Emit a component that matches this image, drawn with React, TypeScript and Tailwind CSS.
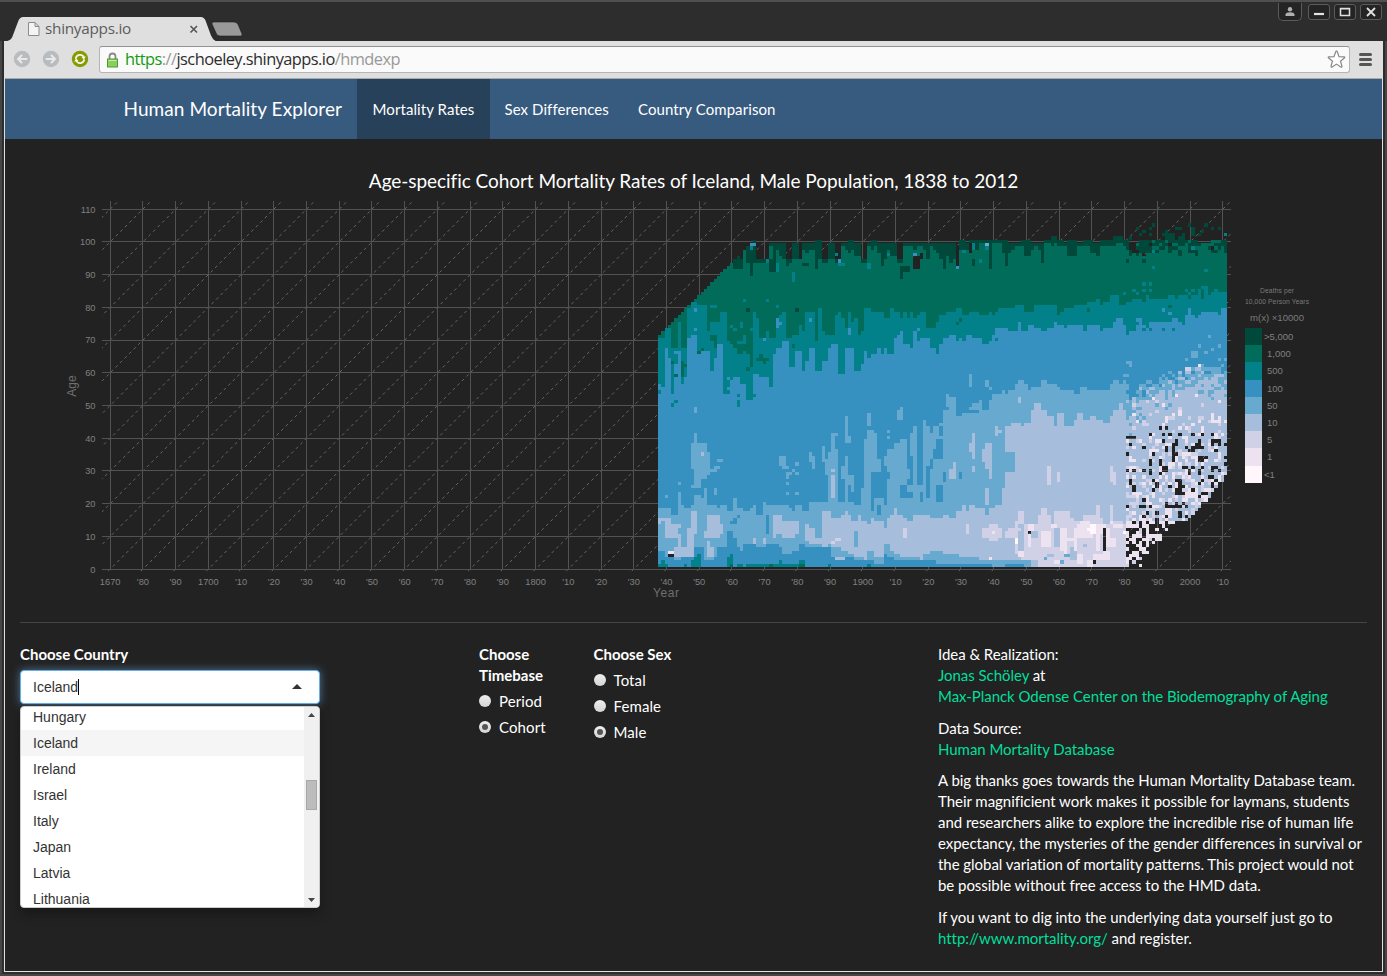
import React from 'react';

const COLORS = ['#00483a', '#016c59', '#02818a', '#3690c0', '#67a9cf', '#a6bddb', '#d0d1e6', '#ece2f0', '#fff7fb'];
const COLS = 174;
const ROWS = 108;
const STEP = 3.2723;
const LEFT = 658;
const BASE = 567;

// Contours and patches are stored in thirds of a pixel, relative to one of four chart quadrants.
type Panel = 'A' | 'B' | 'C' | 'D';
const ORIGIN: Record<Panel, [number, number]> = { A: [640, 195], B: [930, 195], C: [640, 390], D: [930, 390] };

const toPoints = (panel: Panel, s: string) =>
  s.trim().split(/\s+/).map((p) => {
    const [x, y] = p.split(':').map(Number);
    return [ORIGIN[panel][0] + x / 3, ORIGIN[panel][1] + y / 3];
  });

const contour = (...parts: [Panel, string][]) => parts.flatMap(([p, s]) => toPoints(p, s));

const dataTop = contour(
  ['A', '54:423 64:413 74:403 84:393 93:383 103:373 113:364 123:354 133:344 143:334 152:324 162:314 172:304 182:295 192:285 201:275 211:265 221:255 231:245 241:236 250:226 260:216 270:206 280:196 290:187 300:196 309:167 319:157 329:147 340:136 348:195 388:147 438:195 457:147 477:195 487:147 525:136 546:195 564:147 585:195 603:147 625:136 642:147 663:195 683:147 693:136 711:147 771:195 792:147'],
  ['B', '0:147 88:136 108:147 118:136 235:147 275:136 302:147 342:136 363:126 382:136 400:147 412:136 442:147 462:136 488:147 508:136 548:126 580:136 597:144 620:136 740:136 800:136 850:136 880:128'],
);
const greenTop = contour(
  ['A', '54:0 280:222 308:165 322:205 330:242 340:205 348:205 378:200 388:232 408:165 420:185 430:195 438:215 447:200 457:195 477:195 487:160 497:175 510:165 525:222 535:195 546:205 556:200 564:195 585:200 595:195 603:155 614:160 625:175 635:160 642:180 663:200 683:155 693:165 705:150 712:175 722:210 732:195 740:160 750:185 771:200 792:155 820:160 830:150 850:165 860:190 870:155 880:165 888:175'],
  ['B', '0:200 10:155 20:175 30:190 40:225 50:185 60:200 70:195 78:200 88:165 108:165 118:150 125:165 145:155 150:147 178:225 185:147 215:175 225:213 235:175 248:165 255:155 275:155 285:185 303:165 312:155 322:165 332:205 342:147 360:157 372:147 385:155 412:187 442:155 470:155 480:175 500:185 508:155 540:157 555:147 580:157 590:180 620:165 640:185 660:155 680:160 700:140 720:155 740:165 760:155 780:175 800:145 840:150 870:150'],
);
const tealTop = contour(
  ['A', '54:430 74:403 93:457 113:383 123:457 144:342 154:320 171:333 200:340 212:335 222:333 230:350 240:350 260:440 270:450 280:455 290:480 300:475 308:465 320:480 330:515 338:352 348:370 360:425 375:410 390:425 408:375 420:360 430:350 440:425 460:420 470:415 480:385 488:405 497:352 507:350 525:430 535:345 546:405 556:415 585:360 595:350 605:370 615:400 625:350 635:375 642:370 652:415 663:405 672:345 693:350 712:352 730:372 752:342 762:350 782:372 792:350 800:370 812:350 822:370 830:360 840:352 860:400 888:360'],
  ['B', '0:400 18:375 30:362 50:352 78:343 96:360 115:352 136:350 144:360 175:350 185:360 195:352 205:343 230:345 250:333 285:350 312:333 382:360 393:350 405:343 432:335 472:323 500:313 510:330 520:323 540:303 568:330 588:313 600:320 607:305 635:313 650:303 660:310 700:313 720:305 735:305 750:295 765:290 775:300 785:305 795:290 805:280 815:300 825:275 835:290 855:273 865:292 880:282'],
);
const blueTop = contour(
  ['A', '54:565 64:580 74:455 84:490 93:595 103:510 113:475 123:563 134:550 144:430 171:470 190:465 212:525 222:490 232:450 252:590 262:580 270:560 280:545 300:570 320:615 340:535 360:550 375:545 388:575 400:480 410:460 428:440 447:515 468:470 488:525 498:500 510:460 525:530 546:500 556:495 566:460 575:445 595:535 614:455 640:470 645:525 660:510 672:465 682:485 695:480 712:460 720:480 732:460 740:475 760:435 770:420 792:450 805:460 815:410 830:435 840:425 850:425 870:460 888:478'],
  ['B', '0:465 18:478 30:450 40:430 60:420 75:440 88:425 100:435 110:420 125:428 155:445 175:440 185:420 200:403 235:410 265:382 273:405 295:393 310:403 325:398 335:410 352:400 372:382 385:393 400:403 410:388 430:392 462:410 472:392 510:410 520:400 550:380 560:373 580:385 590:410 605:400 620:388 640:400 655:380 690:385 700:378 740:375 757:385 766:360 775:352 795:370 805:350 830:350 845:345 855:352 870:343'],
);
const lightTop = contour(
  ['C', '54:357 75:350 94:375 113:310 123:345 134:357 152:345 162:318 182:325 192:300 202:345 230:357 240:345 260:360 280:325 290:357 310:365 325:355 340:345 348:375 368:335 380:345 450:355 460:365 470:345 482:365 508:335 555:335 595:335 605:335 625:335 640:345 662:365 672:345 692:360 705:325 732:345 742:290 780:325 820:290 840:335 850:325 870:345'],
  ['D', '0:130 10:110 30:100 40:60 60:20 75:80 90:75 100:65 118:50 125:40 145:35 155:60 180:30 190:15 200:10 215:5'],
  ['B', '225:598 235:582 255:570 265:558 285:570 295:588 305:575 323:570 335:558 355:568 380:575 393:590 430:595 442:600 450:577 470:590 500:588 530:582 540:570 550:560 570:570 580:560 598:570 630:550 650:538 690:525 740:512 770:505 800:495 830:487 860:482 880:478'],
);
const lavTop = contour(
  ['C', '54:3000 497:405 507:415 527:440 546:367 575:385 605:375 615:358 625:375 635:395 652:375 663:395 680:405 692:385 705:395 733:410 742:385 752:375 762:358 772:375 792:385 800:395 820:375 870:385'],
  ['D', '0:385 40:375 60:385 75:360 95:345 105:365 115:345 140:358 165:370 180:355 200:345 215:300 225:110 245:100 275:110 285:100 305:60 312:42 332:60 352:80 370:105 382:65 402:105 430:85 440:73 460:85 480:75 500:90 520:95 540:80 550:55 570:45 580:55 590:20 610:0'],
  ['B', '625:580 660:560 700:545 740:525 780:512 830:520 870:512'],
);
const lavBottom = contour(
  ['C', '54:0 497:455 507:460 527:465 546:475 565:465 575:475 605:485 625:490 640:505 672:515 682:485 702:500 722:505 733:465 750:485 760:495 780:505 840:512 850:495 870:485 880:490'],
  ['D', '0:475 10:485 40:490 90:500 150:510 250:515 300:600'],
);
const lightBottom = contour(
  ['C', '54:485 75:505 105:510 123:505 152:490 162:470 182:470 192:510 222:500 232:475 262:430 280:445 290:470 300:480 310:465 335:455 350:475 375:465 405:460 418:475 430:490 460:480 480:460 500:470 520:470 540:475 575:500 585:515 610:505 640:510 660:515 700:520 735:490 742:505 760:515 885:520'],
  ['D', '20:520 70:522 190:600 225:520 250:600'],
);
const paleTop = contour(['D', '-100:3000 325:375 335:358 352:375 362:400 372:365 388:360 420:380 430:395 450:390 460:378 480:375 502:345 510:385 520:400 540:345 548:375 550:395 580:400']);
const dataBottom = contour(['D', '-300:600 620:530 640:520 650:500 660:475 680:455 700:445 710:423 730:405 755:395 770:385 780:375 790:365 800:355 810:345 822:335 832:325 842:310 852:295 862:285 873:275 882:265']);

// Colour index followed by x, y, width, height; -1 clears cells.
const PATCHES: [Panel, string][] = [
  ['A', `3,330,147,18,9 2,330,157,9,9 2,378,196,10,9 2,408,205,9,28 2,457,235,10,28 2,585,175,9,10 3,595,196,9,9 2,595,206,19,9 2,685,205,9,18
  1,388,150,10,45 0,487,205,18,9 0,780,212,12,42 0,792,212,18,22 2,740,175,10,9 -1,820,185,20,40 -1,840,175,10,20 3,820,175,10,9
  2,309,313,10,9 2,378,313,9,9 0,320,343,9,9 0,468,343,9,9 3,162,343,9,9 2,408,333,9,12 3,408,372,10,30 3,418,382,10,10 3,507,372,9,9 3,369,431,9,9
  1,200,345,15,60 1,215,345,25,35 1,232,343,28,10 1,212,423,20,20 1,222,443,12,15 2,270,385,10,9 2,280,400,12,12 2,300,380,10,15 2,290,440,20,9 2,309,420,10,25 2,328,400,10,9
  3,625,402,9,16 3,162,402,9,9 3,154,420,18,60 3,74,461,9,9 3,113,470,9,9 3,103,470,9,9 1,93,500,12,10 1,103,540,10,9 1,123,502,10,42 1,133,510,10,9
  1,171,470,12,10 1,182,460,10,9 1,320,515,10,10 1,348,490,38,9 1,358,482,10,9 1,368,500,10,8 1,455,450,12,9 1,525,430,9,10 3,262,550,8,9 2,290,598,9,9 2,320,560,19,56 2,340,598,9,9 2,103,620,9,9 2,290,620,9,9
  3,762,430,20,9 3,780,412,12,35 3,850,425,20,30 3,830,402,10,9`],
  ['B', `-1,78,147,10,65 3,78,213,10,12 2,125,147,13,18 -1,118,147,8,25 2,96,165,10,9 4,165,147,12,9 2,165,157,12,9 2,147,195,9,9 0,125,195,12,16 0,178,185,9,40 0,225,175,9,38 0,332,185,9,18
  -1,597,147,20,18 -1,610,165,16,9 -1,635,175,12,9 2,665,165,9,9 2,665,213,9,9 2,825,225,9,9 2,783,155,10,9 2,882,118,8,10 -1,655,147,10,9 -1,717,147,9,9 -1,843,155,9,9
  0,617,97,9,9 0,635,106,12,9 0,655,97,10,9 0,667,87,8,9 0,627,116,9,9 0,597,127,9,9 0,655,116,9,9 0,705,106,12,16 0,697,116,9,9 0,715,116,20,9 0,735,97,9,9 0,745,97,10,9 0,755,116,9,9 0,775,87,9,9 0,785,97,9,25 0,805,116,12,9 0,815,106,12,9 0,825,87,9,9 0,843,97,9,9 0,863,97,9,9 0,705,126,30,9 0,745,126,20,9
  2,635,264,12,9 2,655,264,10,9 2,610,283,9,9 2,635,283,12,9 2,655,283,9,9 2,578,293,9,9 2,617,293,9,9 2,783,283,9,9 2,815,273,9,9 2,765,283,9,9 1,470,343,9,9 1,717,333,9,9 1,88,372,9,9 1,78,382,9,9 2,195,430,9,9
  3,265,382,9,9 3,697,343,9,9 3,717,352,9,9 3,617,372,18,9 2,588,412,9,9 2,635,402,9,9 2,655,402,9,9 2,697,402,9,9 2,725,402,9,9 4,588,498,18,9 4,600,510,10,9 4,579,538,18,9 4,833,420,9,9 4,805,451,9,9 4,863,451,9,9 4,785,470,18,16 4,825,470,9,9 4,843,461,9,9 4,765,490,9,9
  4,118,538,8,38 4,165,558,10,17 4,175,577,9,9 4,48,597,9,40 5,263,606,9,20 3,323,567,9,9
  7,795,597,9,9 7,667,606,9,9 7,735,597,9,9 6,647,615,9,9 6,675,620,9,9 7,805,510,9,9 6,765,520,15,9`],
  ['C', `2,54,3,12,9 2,93,0,10,11 2,93,42,12,9 2,105,34,9,9 2,252,2,18,9 2,262,-4,9,9 2,290,12,9,9 2,290,33,9,18 2,320,0,19,32 2,338,12,9,9
  4,162,50,9,20 4,162,130,9,30 4,152,160,50,80 4,200,190,12,65 4,162,240,40,25 4,162,260,20,35 4,152,288,12,9 4,210,235,22,15 4,222,222,20,14 4,232,207,20,12 4,222,298,9,16 4,113,277,9,9 4,75,316,9,9
  4,418,200,22,28 4,428,228,20,10 4,438,245,10,20 4,447,250,9,9 4,457,237,12,10 4,468,220,9,10 4,468,250,9,9 4,438,278,9,9 4,438,308,9,9 4,468,308,9,9 4,546,170,9,45 4,508,190,9,10 4,508,200,15,20 4,517,220,8,14
  4,575,130,18,12 4,575,140,10,60 4,565,190,28,145 4,556,210,10,45 4,585,180,8,40 4,615,80,9,80 4,615,140,18,20 4,605,228,20,35 4,615,200,9,160 4,625,258,15,30 4,635,280,6,30
  4,684,70,9,40 4,684,120,15,30 4,672,145,30,105 4,700,130,10,120 4,672,240,20,120 4,662,300,12,65 4,700,205,22,45 4,732,200,70,30 4,742,180,60,70 4,762,160,40,50 4,780,150,20,20 4,752,240,25,110 4,780,240,20,50 4,740,265,20,40
  4,740,120,9,9 4,740,140,9,9 4,770,60,20,28 4,780,50,12,20 4,820,110,10,90 4,810,130,10,65 4,820,195,10,90 4,800,240,10,30 4,850,90,8,260 4,858,110,10,120 4,868,180,12,150 4,880,140,10,60 4,888,110,12,230 4,800,290,50,15
  5,182,187,9,9 5,575,237,9,10 5,575,258,9,68 3,378,375,9,28 3,378,405,9,30 3,280,385,10,20 3,270,395,12,9 3,290,375,9,9 3,262,425,16,60 3,780,310,9,12 3,800,310,9,12 3,715,345,9,28
  5,54,385,22,10 5,54,395,10,10 5,75,385,18,58 5,85,400,28,40 5,110,405,12,12 5,113,435,9,40 5,152,368,20,65 5,144,415,22,88 5,105,475,40,28 5,202,375,37,65 5,192,420,10,20 5,238,405,12,25 5,202,475,20,28 5,202,455,10,20 5,340,445,9,20 5,370,445,9,20
  5,400,375,28,30 5,400,395,80,30 5,410,425,70,8 5,428,433,40,12 5,400,425,10,20 4,640,425,12,48 5,585,505,30,8 6,585,445,18,8 6,575,453,10,12 6,792,415,9,28 7,84,485,20,8 -1,84,493,20,10
  2,64,515,10,9 2,54,522,30,9 2,133,522,10,9 2,152,512,10,20 2,162,500,20,30 2,172,492,10,10 2,262,505,16,25 2,272,492,8,15 1,270,522,10,9 2,290,522,20,9 2,320,522,180,9 1,388,522,10,9 2,418,512,9,9 2,478,512,14,9 1,478,522,14,9 2,565,522,10,9 2,685,522,9,9`],
  ['D', `3,18,150,20,60 3,10,180,20,25 3,18,285,20,50 3,0,210,10,30 3,38,245,9,28 3,30,110,10,30 3,88,250,8,16 4,38,65,40,35 5,128,130,9,75 5,118,160,10,30 5,128,230,9,18 5,165,160,20,75 5,155,180,10,35 5,175,220,10,45 5,165,298,12,45 5,58,235,20,28 5,70,220,8,16 5,195,110,10,30 5,205,120,12,9 5,263,22,9,18 4,225,190,10,60 4,235,190,20,58 3,118,60,30,12
  6,108,405,9,30 6,155,415,60,12 6,155,425,60,20 6,175,405,30,50 6,225,425,30,18 6,235,415,40,12 6,265,365,20,40 6,255,395,10,100 6,265,485,25,20 6,285,405,20,90 6,305,400,15,30 6,275,490,50,20 6,305,440,20,60 6,352,230,10,20 6,355,250,8,35 6,382,250,9,25 6,540,230,8,48 6,550,250,8,35
  4,340,500,15,9 5,372,415,20,60 5,352,490,15,15 5,420,470,20,40 4,400,493,18,9 5,430,480,12,20 5,460,465,10,9 4,510,503,10,9 5,265,430,20,50 5,305,425,20,20
  7,295,405,18,18 7,295,435,8,40 7,335,425,28,46 7,362,400,20,12 7,395,415,12,65 7,400,480,15,15 7,410,442,20,9 7,430,418,10,65 7,440,405,60,30 7,450,395,30,15 7,440,435,45,12 7,500,400,25,30 7,500,425,10,60 7,530,412,12,65 7,540,440,20,32 7,540,395,10,12 7,550,400,30,9 7,265,485,20,18 7,185,423,10,9 7,440,490,20,30 7,470,508,20,20 7,488,495,50,18 7,515,482,20,32 7,370,510,20,9 7,175,503,9,9
  8,480,405,20,30 8,470,412,10,12 8,255,445,9,18 8,580,425,9,9 -1,295,423,8,10 -1,520,415,8,68 -1,488,512,12,9
  3,250,520,35,9 4,255,512,30,8 4,390,512,15,8
  -1,588,142,20,9 4,597,130,12,9 -1,588,190,9,9 -1,588,237,9,9 -1,597,275,12,9 -1,635,170,12,9 -1,655,130,10,9 -1,687,112,9,9 -1,705,112,10,9 -1,705,170,12,18 -1,725,170,9,45 -1,655,208,12,18 -1,635,237,12,9 -1,697,230,18,18 -1,745,130,9,9 -1,783,130,9,9 -1,785,170,38,12 -1,775,180,20,9 -1,805,150,9,22 -1,805,195,18,20 -1,735,298,18,18 -1,745,270,10,40 -1,725,340,10,18 -1,655,340,9,14`],
];

const hash = (a: number, b: number, k = 0) => {
  let h = (a * 374761393 + b * 668265263 + k * 1274126177) | 0;
  h = Math.imul(h ^ (h >>> 13), 1274126177);
  h = Math.imul(h ^ (h >>> 15), 2246822519);
  return ((h ^ (h >>> 16)) >>> 0) / 4294967296;
};

const at = (pts: number[][], x: number) => {
  let y = pts[0][1];
  for (const p of pts) {
    if (p[0] > x) break;
    y = p[1];
  }
  return y;
};

function buildCells(): number[][] {
  const grid: number[][] = [];
  for (let c = 0; c < COLS; c++) {
    const x = LEFT + (c + 0.5) * STEP;
    const recent = c >= 143;
    const col: number[] = [];
    for (let r = 0; r < ROWS; r++) {
      const y = BASE - (r + 0.5) * STEP;
      const j = (k: number, amp: number) => (recent ? (hash(c, r, k) - 0.5) * amp : 0);
      let v = -1;
      if (y > at(dataTop, x) + j(1, 5)) v = 0;
      if (v === 0 && y > at(greenTop, x) + j(2, 18)) v = 1;
      if (v >= 0 && y > at(tealTop, x) + j(3, 7)) v = 2;
      if (v >= 0 && y > at(blueTop, x) + j(4, 5)) v = 3;
      const spread = recent ? 1 : 0;
      if (v === 3 && y > at(lightTop, x) + hash(c, r, 5) * 20 * spread && y < at(lightBottom, x)) v = 4;
      if (v >= 3 && y > at(lavTop, x) + Math.pow(hash(c, r, 6), 1.3) * 36 * spread && y < at(lavBottom, x)) v = 5;
      if (v === 5 && y > at(paleTop, x) && (!recent || y > 517)) v = 6;
      if (recent && y > 396) {
        const depth = Math.min(1, Math.max(0, (y - 420) / 85));
        const late = (c - 143) / 31;
        const q = hash(c, r, 9);
        if (v >= 5) {
          if (y > 522) v = q < 0.48 ? -1 : q < 0.9 ? 7 : 6;
          else {
            const hole = y > 432 ? 0.045 + late * 0.09 + depth * 0.03 : 0;
            const pink = y > 418 ? 0.07 + depth * 0.1 + late * 0.13 : 0.02 + 0.03 * late;
            const lav = 0.06 + depth * 0.13;
            if (q < hole) v = -1;
            else if (q < hole + pink) v = 7;
            else if (q < hole + pink + lav) v = 6;
          }
        }
        if (y > at(dataBottom, x)) v = -1;
      }
      col.push(v);
    }
    grid.push(col);
  }
  for (const [panel, list] of PATCHES) {
    const [ox, oy] = ORIGIN[panel];
    for (const item of list.trim().split(/\s+/)) {
      const [v, px, py, pw, ph] = item.split(',').map(Number);
      const c0 = Math.round((ox + px / 3 - LEFT) / STEP);
      const c1 = Math.max(c0 + 1, Math.round((ox + (px + pw) / 3 - LEFT) / STEP));
      const r1 = Math.round((BASE - oy - py / 3) / STEP);
      const r0 = Math.min(r1 - 1, Math.round((BASE - oy - (py + ph) / 3) / STEP));
      for (let c = Math.max(0, c0); c < Math.min(COLS, c1); c++)
        for (let r = Math.max(0, r0); r < Math.min(r1, ROWS); r++) grid[c][r] = v;
    }
  }
  return grid;
}

const cells = buildCells();
const paths = COLORS.map((_, v) => {
  let d = '';
  cells.forEach((col, c) => {
    const x0 = Math.round(LEFT + c * STEP);
    const x1 = Math.round(LEFT + (c + 1) * STEP);
    let r = 0;
    while (r < col.length) {
      if (col[r] !== v) {
        r++;
        continue;
      }
      const start = r;
      while (r < col.length && col[r] === v) r++;
      const y0 = Math.round(BASE - r * STEP);
      const y1 = Math.round(BASE - start * STEP);
      d += `M${x0} ${y0}H${x1}V${y1}H${x0}Z`;
    }
  });
  return d;
});

const decades = Array.from({ length: 35 }, (_, i) => 1670 + i * 10);
const ages = Array.from({ length: 12 }, (_, i) => i * 10);
const xOf = (year: number) => 110.2 + (year - 1670) * STEP;
const yOf = (age: number) => 569.1 - age * STEP;
const yearLabel = (y: number) => (y === 1670 || y % 100 === 0 ? String(y) : `'${String(y % 100).padStart(2, '0')}`);
const legend = ['>5,000', '1,000', '500', '100', '50', '10', '5', '1', '<1'];

function Chart() {
  return (
    <svg className="block h-[410px] w-[1377px] font-['Liberation_Sans',sans-serif]" viewBox="5 195 1377 410">
      <defs>
        <clipPath id="plot">
          <rect x="102" y="201" width="1129" height="371" />
        </clipPath>
      </defs>
      <g clipPath="url(#plot)" fill="none">
        {Array.from({ length: 48 }, (_, i) => {
          const start = 1540 + i * 10;
          return (
            <line key={start} x1={xOf(start - 2)} y1={yOf(-2)} x2={xOf(start + 115)} y2={yOf(115)} stroke="#777" strokeWidth="0.8" strokeDasharray="3 3.4" />
          );
        })}
        {decades.map((d) => (
          <line key={d} x1={Math.floor(xOf(d)) + 0.5} x2={Math.floor(xOf(d)) + 0.5} y1="201" y2="570" stroke="#525252" />
        ))}
        {ages.map((a) => (
          <line key={a} x1="102" x2="1231" y1={Math.floor(yOf(a)) + 0.5} y2={Math.floor(yOf(a)) + 0.5} stroke="#525252" />
        ))}
      </g>
      {paths.map((d, i) => (
        <path key={COLORS[i]} d={d} fill={COLORS[i]} shapeRendering="crispEdges" />
      ))}
      <g fill="#808080" fontSize="9.3">
        {ages.map((a) => (
          <text key={a} x="95.5" y={yOf(a) + 3.4} textAnchor="end">{a}</text>
        ))}
        {decades.map((d) => (
          <text key={d} x={xOf(d)} y="585" textAnchor="middle">{yearLabel(d)}</text>
        ))}
      </g>
      <g fill="#6f6f6f">
        <text x="666" y="597" fontSize="12" textAnchor="middle" textLength="26">Year</text>
        <text transform="translate(76 386) rotate(-90)" fontSize="12" textAnchor="middle">Age</text>
      </g>
      <g fill="#7b7b7b" textAnchor="middle">
        <text x="1277" y="293" fontSize="6.7" textLength="34">Deaths per</text>
        <text x="1277" y="304" fontSize="6.7" textLength="64">10,000 Person Years</text>
        <text x="1277" y="321" fontSize="9.6" textLength="54">m(x) ×10000</text>
      </g>
      {legend.map((label, i) => (
        <g key={label}>
          <rect x="1245" y={Math.round(328 + i * 17.2)} width="17" height={Math.round(328 + (i + 1) * 17.2) - Math.round(328 + i * 17.2)} fill={COLORS[i]} />
          <text x={i === 0 || i === 8 ? 1264 : 1267} y={340 + i * 17.2} fontSize={9.5} fill="#808080">{label}</text>
        </g>
      ))}
    </svg>
  );
}

function WindowButton({ children }: { children: React.ReactNode }) {
  return (
    <span className="flex h-4 w-[22px] items-center justify-center rounded-[3px] border border-[#5b5b5b] bg-[#242424]">
      <svg className="h-3 w-3" viewBox="0 0 12 12" fill="none" stroke="#e2e2e2" strokeWidth="1.5">{children}</svg>
    </span>
  );
}

function TabStrip() {
  return (
    <div className="flex h-[41px] shrink-0 border-t-2 border-[#505050] bg-[#2d2d2d]">
      <div className="relative mt-[14px] ml-[4px] h-[25px] w-[240px]">
        <svg className="absolute inset-0 h-[25px] w-[240px]" viewBox="4 16 240 25">
          <path d="M4 41.5C11 41 12 38 13 35L18.500 20.500Q20 17 23 17H201Q204 17 205.500 20.500L211 35.500Q213 40.500 217 41.500Z" fill="#dfdfdf" />
          <path d="M214 22H234Q237 22 238 24.500L242 34Q242.500 36 240.500 36H220Q217.500 36 216.500 34L212 24Q211.500 22 214 22Z" fill="#999" stroke="#222" strokeWidth=".6" />
          <path d="M28.500 22.500H35L39 26.500V35.500H28.500ZM35 22.500V26.500H39" fill="#f4f4f4" stroke="#8c8c8c" />
          <path d="M190.500 26 197 32.500M197 26 190.500 32.500" stroke="#555" strokeWidth="1.6" />
        </svg>
        <span className="absolute top-[1px] left-[41px] font-['Open_Sans',sans-serif] text-[15.300px] leading-[22px] tracking-[-0.27px] text-[#5c5c5c]">shinyapps.io</span>
      </div>
      <div className="mt-[2px] mr-[5px] ml-auto flex gap-1">
        <span className="mt-[-1px] mr-[2px] flex h-[18px] w-6 items-center justify-center rounded-b-[5px] border border-t-0 border-[#5b5b5b] bg-[#242424]">
          <svg className="h-[10px] w-[10px]" viewBox="0 0 10 10" fill="#b0b0b0"><circle cx="5" cy="2.300" r="2.200" /><path d="M.5 9V7.500Q1 5.200 5 5.200T9.500 7.500V9Z" /></svg>
        </span>
        <div className="flex gap-1">
          <WindowButton><path d="M1 8H11" strokeWidth="2.200" /></WindowButton>
          <WindowButton><path d="M1.500 2.500H10.500V9.500H1.500ZM1 2.800H11" /></WindowButton>
          <WindowButton><path d="M2 2 10 10M10 2 2 10" strokeWidth="1.800" /></WindowButton>
        </div>
      </div>
    </div>
  );
}

function Toolbar() {
  return (
    <div className="flex h-[38px] shrink-0 items-start border-b border-[#aaa] bg-[#dfdfdf] pt-[5px]">
      <svg className="mt-[4px] ml-[8px] h-[18px] w-[78px] shrink-0" viewBox="13 50 78 18" fill="none" strokeLinecap="round">
        <circle cx="22" cy="59" r="8.200" fill="#b9bcbf" />
        <path d="M26.500 59H18M21.500 55.500 18 59 21.500 62.500" stroke="#e9e9e9" strokeWidth="2" />
        <circle cx="51" cy="59" r="8.200" fill="#b9bcbf" />
        <path d="M46.500 59H55M51.500 55.500 55 59 51.500 62.500" stroke="#e9e9e9" strokeWidth="2" />
        <circle cx="80" cy="59" r="8.200" fill="#859b00" />
        <path d="M75.800 58A4.400 4.400 0 0 1 84 57.500M84.200 60A4.400 4.400 0 0 1 76 60.500" stroke="#f4f4e8" strokeWidth="1.800" />
        <path d="M85.800 56.500 83.800 59.800 81.500 57ZM74.200 61.500 76.200 58.300 78.500 61Z" fill="#f4f4e8" />
      </svg>
      <div className="ml-[8px] flex h-[27px] w-[1251px] items-center rounded-[3px] border border-[#b5b5b5] border-t-[#929292] bg-[#fafafa]">
        <svg className="ml-[6px] h-4 w-[13px]" viewBox="0 0 13 16">
          <path d="M3.500 8V4.500Q3.500 1.500 6.500 1.500T9.500 4.500V8" fill="none" stroke="#888" strokeWidth="1.800" />
          <rect x="1.500" y="7" width="10" height="8" fill="#8bd05f" stroke="#4c9c32" />
          <path d="M2.500 8.500H10.500" stroke="#c5ecac" />
        </svg>
        <span className="mb-[2px] ml-[6px] font-['Open_Sans',sans-serif] text-[16.400px] leading-6 tracking-[-0.55px] whitespace-nowrap text-[#999]">
          <span className="text-[#139a13]">https</span>://<span className="text-[#2d2d2d]">jschoeley.shinyapps.io</span>/hmdexp
        </span>
        <svg className="mr-[3px] ml-auto h-[19px] w-[19px]" viewBox="0 0 19 19">
          <path d="M9.500 1.200Q10 1 10.400 2L12 6.600 17 6.800Q18.500 7 17.300 8L13.500 11.200 14.900 16Q15.200 17.700 13.800 16.900L9.500 14.100 5.200 16.900Q3.800 17.700 4.100 16L5.500 11.200 1.700 8Q.5 7 2 6.800L7 6.600 8.600 2Q9 1 9.500 1.200Z" fill="#fff" stroke="#888" strokeWidth="1.200" />
        </svg>
      </div>
      <div className="mt-[7px] ml-[9px] flex w-[13px] flex-col gap-[2px]">
        <span className="h-[3px] rounded-sm bg-[#555]" />
        <span className="h-[3px] rounded-sm bg-[#555]" />
        <span className="h-[3px] rounded-sm bg-[#555]" />
      </div>
    </div>
  );
}

function Radio({ label, checked }: { label: string; checked?: boolean }) {
  return (
    <label className="flex h-[26px] items-center">
      <span className="mb-px flex h-3 w-3 items-center justify-center rounded-full bg-linear-to-b from-[#eee] to-[#d4d4d4]">
        {checked && <span className="h-[6px] w-[6px] rounded-full bg-[#555]" />}
      </span>
      <span className="ml-2 tracking-[0.1px]">{label}</span>
    </label>
  );
}

const countries = ['Hungary', 'Iceland', 'Ireland', 'Israel', 'Italy', 'Japan', 'Latvia', 'Lithuania'];

function CountrySelect() {
  return (
    <div className="relative mt-[5px] w-[300px] font-['Liberation_Sans',sans-serif] text-[14px] text-[#333]">
      <div className="flex h-[34px] items-center rounded-[4px] border border-[#66afe9] bg-white pl-3 shadow-[0_0_8px_rgba(102,175,233,0.6)]">
        <span>Iceland</span>
        <span className="h-4 w-px bg-black" />
        <svg className="mr-[17px] mb-[2px] ml-auto h-[5px] w-[10px]" viewBox="0 0 10 5"><path d="M0 5 5 0 10 5Z" fill="#333" /></svg>
      </div>
      <div className="absolute top-9 left-0 flex h-[202px] w-[300px] overflow-hidden rounded-[4px] border border-[#ccc] bg-white shadow-[0_6px_12px_rgba(0,0,0,0.3)]">
        <ul className="mt-[-3px] grow">
          {countries.map((name) => (
            <li key={name} className={name === 'Iceland' ? 'h-[26px] bg-[#f5f5f5] pl-3 leading-[26px]' : 'h-[26px] pl-3 leading-[26px]'}>{name}</li>
          ))}
        </ul>
        <div className="flex w-[15px] flex-col items-center bg-[#f0f0f0]">
          <svg className="mt-[6px] h-1 w-[7px]" viewBox="0 0 7 4"><path d="M0 4 3.500 0 7 4Z" fill="#444" /></svg>
          <span className="mt-[63px] h-[30px] w-[11px] border border-[#a8a8a8] bg-[#bcbcbc]" />
          <svg className="mt-auto mb-[5px] h-1 w-[7px]" viewBox="0 0 7 4"><path d="M0 0 3.500 4 7 0Z" fill="#444" /></svg>
        </div>
      </div>
    </div>
  );
}

export default function App() {
  return (
    <div className="flex h-[976px] w-[1387px] flex-col overflow-hidden bg-[#2d2d2d] [font-variant-ligatures:none]">
      <TabStrip />
      <div className="flex h-[935px] border-x-2 border-b-2 border-[#454545] pr-[2px] pb-[2px] pl-[2px]">
        <div className="flex w-[1379px] flex-col border-x border-b border-[#dfdfdf] bg-[#222] font-[Lato,sans-serif] text-[15px] leading-[21px] text-white">
          <Toolbar />
          <nav className="flex h-[60px] shrink-0 items-center bg-[#375a7f] tracking-[0.08px]">
            <span className="mb-[2px] w-[352px] pl-[118.500px] text-[19px] whitespace-nowrap">Human Mortality Explorer</span>
            <span className="flex h-full w-[133px] items-center justify-center bg-[#28415b]">Mortality Rates</span>
            <span className="w-[133px] pl-[14.500px]">Sex Differences</span>
            <span className="pl-[15px]">Country Comparison</span>
          </nav>
          <h1 className="h-[56px] shrink-0 pt-[31px] text-center text-[19px] leading-[22px] tracking-[-0.05px]">Age-specific Cohort Mortality Rates of Iceland, Male Population, 1838 to 2012</h1>
          <Chart />
          <div className="mx-[15px] mt-[17px] h-px shrink-0 bg-[#464545]" />
          <div className="mt-[21px] flex px-[15px]">
            <div className="w-[459px]">
              <div className="font-bold">Choose Country</div>
              <CountrySelect />
            </div>
            <div className="w-[114.500px]">
              <div className="font-bold">Choose<br />Timebase</div>
              <div className="mt-[2px]">
                <Radio label="Period" />
                <Radio label="Cohort" checked />
              </div>
            </div>
            <div className="w-[344.500px]">
              <div className="font-bold">Choose Sex</div>
              <div className="mt-[2px]">
                <Radio label="Total" />
                <Radio label="Female" />
                <Radio label="Male" checked />
              </div>
            </div>
            <div className="flex flex-col gap-[10.500px] tracking-[-0.04px] whitespace-nowrap">
              <p>Idea &amp; Realization:<br /><a className="text-[#00df9b]">Jonas Schöley</a> at<br /><a className="text-[#00df9b]">Max-Planck Odense Center on the Biodemography of Aging</a></p>
              <p>Data Source:<br /><a className="text-[#00df9b]">Human Mortality Database</a></p>
              <p>A big thanks goes towards the Human Mortality Database team.<br />Their magnificient work makes it possible for laymans, students<br />and researchers alike to explore the incredible rise of human life<br />expectancy, the mysteries of the gender differences in survival or<br />the global variation of mortality patterns. This project would not<br />be possible without free access to the HMD data.</p>
              <p>If you want to dig into the underlying data yourself just go to<br /><a className="text-[#00df9b]">http://www.mortality.org/</a> and register.</p>
            </div>
          </div>
        </div>
      </div>
    </div>
  );
}
